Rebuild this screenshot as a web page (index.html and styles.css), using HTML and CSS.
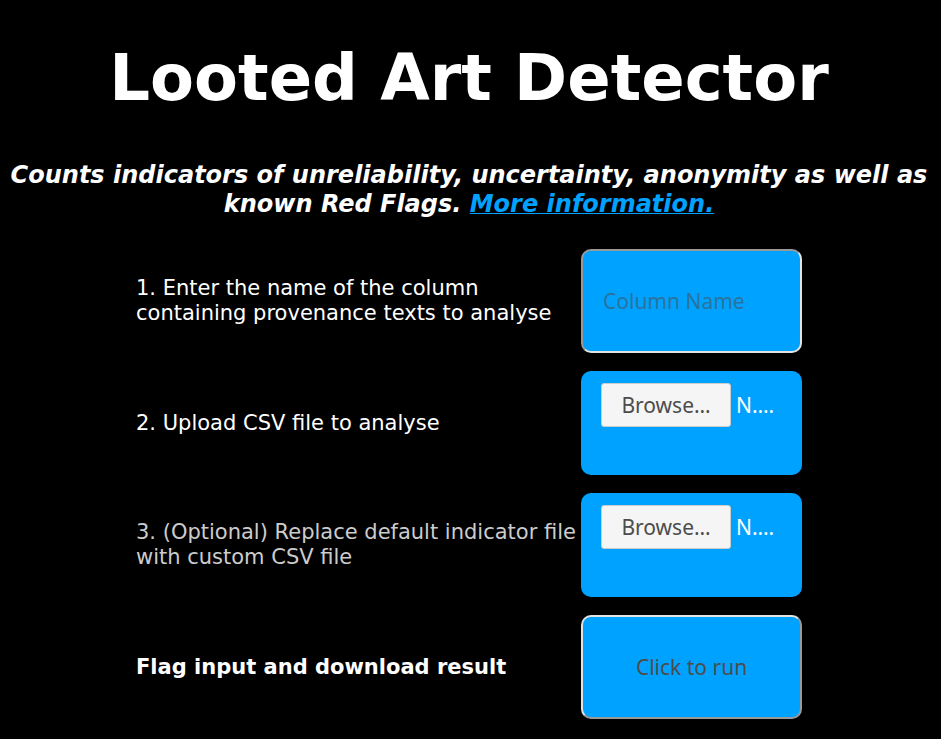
FILE: index.html
```html
<!DOCTYPE html>
<html lang="en">
<head>
<meta charset="utf-8">
<title>Looted Art Detector</title>
<link rel="stylesheet" href="styles.css">
</head>
<body>
<h1>Looted Art Detector</h1>
<h2>Counts indicators of unreliability, uncertainty, anonymity as well as known Red Flags. <a href="#">More information.</a></h2>
<form class="steps">
  <label class="step" for="column">1. Enter the name of the column containing provenance texts to analyse</label>
  <input class="field text-field" id="column" type="text" placeholder="Column Name">

  <label class="step" for="csv">2. Upload CSV file to analyse</label>
  <div class="field file-field">
    <button class="browse" id="csv" type="button">Browse…</button>
    <span class="file-name">N.…</span>
  </div>

  <label class="step optional" for="indicators">3. (Optional) Replace default indicator file with custom CSV file</label>
  <div class="field file-field">
    <button class="browse" id="indicators" type="button">Browse…</button>
    <span class="file-name">N.…</span>
  </div>

  <label class="step final" for="run">Flag input and download result</label>
  <button class="field run" id="run" type="button">Click to run</button>
</form>
</body>
</html>
```
FILE: styles.css
```css
* {
  box-sizing: border-box;
}

body {
  margin: 8px 11px 8px 8px;
  background: #000;
  color: #fff;
  font-family: "DejaVu Sans", sans-serif;
}

h1 {
  margin: 32px 0 45px;
  font-size: 64px;
  line-height: 76px;
  text-align: center;
}

h2 {
  margin: 0 0 30px;
  font-size: 24px;
  line-height: 29px;
  font-style: italic;
  text-align: center;
}

a {
  color: #00a2ff;
  text-decoration-thickness: 1px;
}

.steps {
  display: grid;
  grid-template-columns: 442px 221px;
  gap: 18px 3px;
  justify-content: center;
  align-items: center;
}

.step {
  font-size: 21px;
  line-height: 25px;
}

.optional {
  color: #ccc;
}

.final {
  font-weight: bold;
}

.field {
  width: 100%;
  height: 104px;
  border-radius: 10px;
  background: #00a2ff;
  font-family: "Noto Sans", sans-serif;
  font-size: 21px;
}

.text-field {
  padding: 0 20px;
  border: 2px solid;
  border-color: #999 #e3e3e3 #e3e3e3 #999;
  color: #4c4c4c;
}

.text-field::placeholder {
  color: #4c4c4c;
  opacity: 0.54;
}

.file-field {
  display: flex;
  align-items: flex-start;
  gap: 5px;
  padding: 12px 20px;
}

.browse {
  width: 130px;
  height: 44px;
  border: 1px solid #ccc;
  border-radius: 3px;
  background: #f5f5f5;
  color: #4c4c4c;
  font: inherit;
}

.file-name {
  line-height: 44px;
}

.run {
  border: 2px solid;
  border-color: #e3e3e3 #999 #999 #e3e3e3;
  color: #4c4c4c;
}
```
